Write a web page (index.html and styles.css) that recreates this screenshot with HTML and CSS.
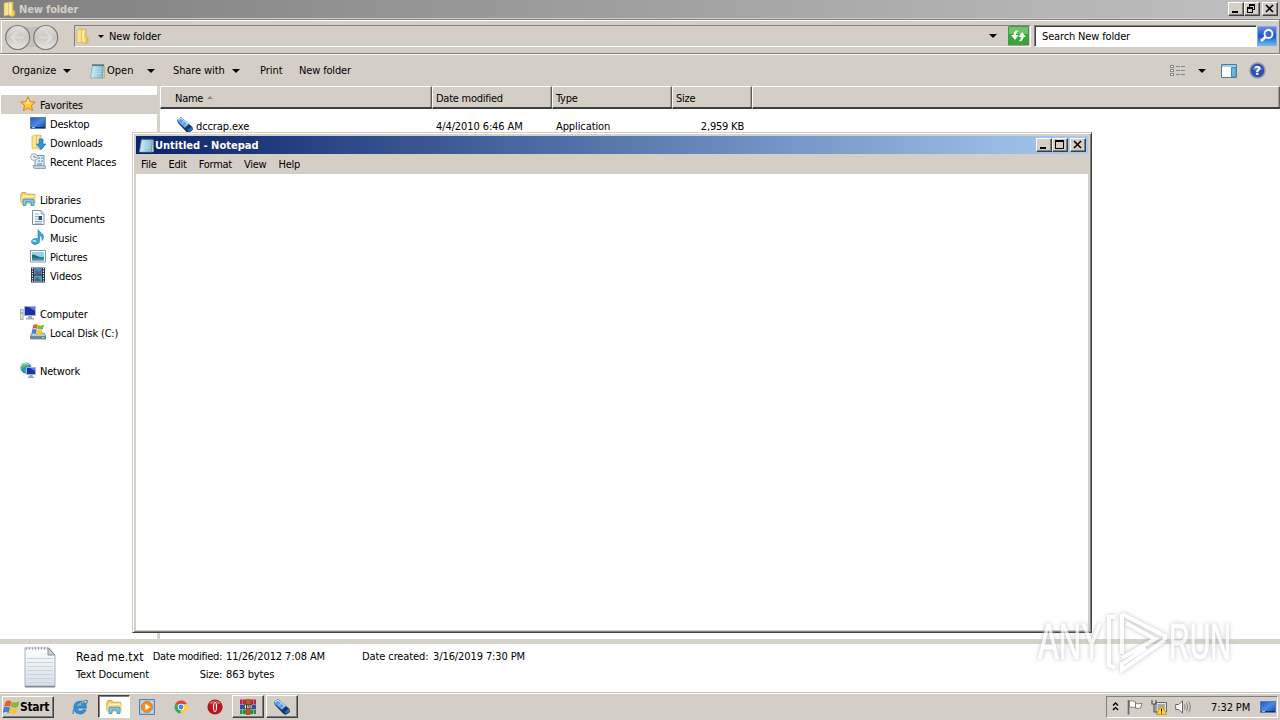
FILE: index.html
```html
<!DOCTYPE html>
<html lang="en">
<head>
  <meta charset="UTF-8">
  <title>New folder</title>
  <link rel="stylesheet" href="styles.css">
</head>
<body>
  <!-- Shared icons -->
  <svg class="defs" width="0" height="0">
    <defs>
      <linearGradient id="gFolder" x1="0" x2="1"><stop offset="0" stop-color="#fff3a8"/><stop offset="1" stop-color="#e3b73c"/></linearGradient>
      <linearGradient id="gScreen" x1="0" x2="1" y2="1"><stop offset="0" stop-color="#2456b8"/><stop offset=".5" stop-color="#4a8be6"/><stop offset="1" stop-color="#173f93"/></linearGradient>
      <linearGradient id="gPad" x1="0" x2="1"><stop offset="0" stop-color="#d8f2f8"/><stop offset="1" stop-color="#6fb4cf"/></linearGradient>
      <linearGradient id="gSheet" x1="0" x2="0" y2="1"><stop offset="0" stop-color="#fff"/><stop offset="1" stop-color="#d3dce6"/></linearGradient>
      <symbol id="folder" viewBox="0 0 16 16">
        <path d="M2 2l5-1v13l-5 1z" fill="#f8e48a" stroke="#d3a93c" stroke-width=".6"/>
        <path d="M7 1h4v8l2 1v4l-3 2-3-2z" fill="url(#gFolder)" stroke="#cda33a" stroke-width=".6"/>
        <path d="M8 3v10" stroke="#fffbd8"/>
      </symbol>
      <symbol id="pad" viewBox="0 0 16 16">
        <path d="M3.500 2.500h11l-1 12.500h-12z" fill="url(#gPad)" stroke="#6a9db0" stroke-width=".7"/>
        <path d="M13.500 15l1-12.500 1 .5v12z" fill="#d8cda0" stroke="#7f8a88" stroke-width=".4"/>
        <path d="M3.500 2h12" stroke="#345" stroke-width="2" stroke-dasharray="1 1"/>
        <path d="M4 5.500h9M3.700 8h9M3.300 10.500h9" stroke="#b5e2ee" stroke-width=".7"/>
      </symbol>
      <symbol id="exe" viewBox="0 0 16 16">
        <path d="M0 3L4 .3 15.500 10l.3 3L12 15.700 9.500 15 1 6z" fill="#16355f"/>
        <path d="M0 3L4 .3l8 7L8 11 1 5z" fill="#5da0ea"/>
        <path d="M1 3l3-1.800L11 7.200" stroke="#d4edff" fill="none"/>
        <path d="M4.500 6.500l4-3M7.500 9l3.500-3" stroke="#c8e4fc" stroke-width=".8"/>
        <path d="M10.500 13l4-3.500 .8 3-3 2.300z" fill="#1b72d8"/>
      </symbol>
      <symbol id="star" viewBox="0 0 16 16">
        <path d="M8 .8l2.100 4.800 5.300.5-4 3.400 1.200 5.200L8 12l-4.600 2.700 1.200-5.200-4-3.400 5.300-.5z" fill="#ffc936" stroke="#e07a1a" stroke-width=".9"/>
        <path d="M8 3l1.300 3.500 3 .3-5 1.400L4 7l2.700-.5z" fill="#fff0a0"/>
      </symbol>
      <symbol id="screen" viewBox="0 0 16 16">
        <path d="M.5 2.500h15v11H.5z" fill="url(#gScreen)" stroke="#5b7ba9"/>
        <path d="M1 12.500h14" stroke="#122d66"/>
        <path d="M2 12.500h3" stroke="#7fd0f0"/>
      </symbol>
      <symbol id="downloads" viewBox="0 0 16 16">
        <use href="#folder"/>
        <path d="M9 5h4v5h3l-5 5.500L6.500 10H9z" fill="#2f96de" stroke="#1561a5" stroke-width=".6"/>
      </symbol>
      <symbol id="recent" viewBox="0 0 16 16">
        <path d="M5 2.500h9v10.500h-9z" fill="#dcebf4" stroke="#7d93a4"/>
        <path d="M3 12.500h11q2 0 1.500 3H5q-2 0-2-3z" fill="#c3d2dc" stroke="#7d93a4" stroke-width=".8"/>
        <path d="M8 5h2M11 5h2M8 8h2M11 8h2M7 11h5" stroke="#4b88b8"/>
        <circle cx="4" cy="4" r="3.400" fill="#f4f7f9" stroke="#8b98a2" stroke-width=".8"/>
        <path d="M4 2v2.300h2" stroke="#555" fill="none" stroke-width=".7"/>
      </symbol>
      <symbol id="library" viewBox="0 0 16 16">
        <path d="M.8 3.200l1-1.700h4l1 1.700h8v8H.8z" fill="#efcf62" stroke="#bf9536" stroke-width=".7"/>
        <path d="M2.500 4.500h12v6h-12z" fill="#fff4b0"/>
        <path d="M1 6h14.500v7H1z" fill="#f3dc7c"/>
        <path d="M3 14.500V9.200q0-1 1-1h9q1 0 1 1v5.300h-3V11H6v3.500z" fill="#7fc8ea" stroke="#3289bb" stroke-width=".8"/>
      </symbol>
      <symbol id="document" viewBox="0 0 16 16">
        <path d="M2.500.5h8.500L14 4v10.500H2.500z" fill="#fff" stroke="#7690aa"/>
        <path d="M11 1v3h3" fill="#d9e7f2" stroke="#7690aa" stroke-width=".7"/>
        <path d="M5 4h4M5 6.500h3M5 9h3M5 11.500h7M5 13.200h7" stroke="#6d94bd" stroke-width=".8"/>
        <path d="M8.500 6H12v4H8.500z" fill="#234e86"/>
      </symbol>
      <symbol id="music" viewBox="0 0 16 16">
        <path d="M8 .5c1 3 5.500 3.200 5.500 7.500 0 2-1 3-1.500 3.500.5-3-.5-4-2.500-4.700V12c0 2-2 3.500-4.500 3.500S1.500 14 1.500 12.500 3.500 9.500 5.500 9.500c1 0 1.500 0 2.500.4z" fill="#3ba4e0" stroke="#2279b8" stroke-width=".6"/>
        <ellipse cx="4.500" cy="12" rx="2" ry="1" fill="#b9e6fb"/>
      </symbol>
      <symbol id="picture" viewBox="0 0 16 16">
        <path d="M.5 2.500h15v11.500H.5z" fill="#fff" stroke="#8796a5"/>
        <path d="M2 4h12v8.500H2z" fill="#8ed3ee"/>
        <path d="M2 6.500c4 0 6 3.500 12 2.500v1.500H2z" fill="#246b61"/>
        <path d="M2 10h12v2.500H2z" fill="#3d87b2"/>
      </symbol>
      <symbol id="video" viewBox="0 0 16 16">
        <path d="M1 .5h14v15H1z" fill="#25303c"/>
        <path d="M4 1h8v6.500H4z" fill="#438fcc"/><path d="M4 8.500h8V15H4z" fill="#4b9ccb"/>
        <path d="M6 3l3 2 2-3v5H5zM5 11l3-1 3 4H5z" fill="#6f5a68"/>
        <path d="M2.500 1v15M13.500 1v15" stroke="#fff" stroke-width="1.200" stroke-dasharray="1.300 1.200"/>
      </symbol>
      <symbol id="computer" viewBox="0 0 16 16">
        <path d="M.6 4.500h2.600v10H.6z" fill="#dfe5df" stroke="#89958a" stroke-width=".7"/><path d="M1 8h2" stroke="#63a84a"/>
        <path d="M4.500 1.500h11v9h-11z" fill="#1a2fb0" stroke="#a9b4c8"/>
        <path d="M9 2h6v4z" fill="#5f7de8"/>
        <path d="M8 11h4v2h2v1.500H6V13h2z" fill="#9eacc0"/>
      </symbol>
      <symbol id="flag" viewBox="0 0 16 16">
        <path d="M2.500 2.500Q5 .5 7.800 2.200L6.800 7.300Q4 5.800 1 7.400z" fill="#ec5a24"/>
        <path d="M8.300 2.600Q11.500 4 15.500 2.300L14 7.500Q10.500 8.800 7.300 7.400z" fill="#7dbb35"/>
        <path d="M.8 8.100Q3.500 6.600 6.600 8L5.300 13.200Q2.500 11.500-.3 13z" fill="#3c83d8"/>
        <path d="M7 8.200Q10 9.600 13.800 8.200L12.200 13.400Q9 14.700 5.800 13.400z" fill="#fbc42a"/>
      </symbol>
      <symbol id="disk" viewBox="0 0 16 16">
        <path d="M2 9h12l2 3v3H.5v-3z" fill="#b9c8d2" stroke="#6d7f8d" stroke-width=".8"/>
        <path d="M.5 12h15.500v3H.5z" fill="#648c9d"/><path d="M12 13.500h2" stroke="#8cff72"/>
        <use href="#flag" x="1.500" y="-1" width="13" height="13"/>
      </symbol>
      <symbol id="network" viewBox="0 0 16 16">
        <circle cx="6" cy="6" r="5.500" fill="#2d8fd0"/>
        <path d="M2 2q4-2 6 0L6 5 3 6 1 8q-1-4 1-6zM5 7l3 2-2 2.500z" fill="#55b857"/>
        <path d="M1.500 4Q5 0 9 3" stroke="#d1f2ff" fill="none"/>
        <path d="M6.500 5.500h9v7h-9z" fill="#1a2fb0" stroke="#a9b4c8"/><path d="M10 6h5v3z" fill="#5f7de8"/>
        <path d="M9.500 13h3v1.500H14V16H8v-1.500h1.500z" fill="#93a3ba"/>
      </symbol>
      <symbol id="ie" viewBox="0 0 16 16">
        <path d="M14.500 9.200H5.300q.3 2.800 3 2.800 1.800 0 2.500-1.200h3.300Q12.500 15 8.300 15 1.800 14.700 1.800 8.500 2.100 2.200 8.300 2.100 14.800 2.300 14.500 9.200zM5.400 6.800h5.500Q10.500 5 8.200 5 6 5 5.400 6.800z" fill="#2c90dc" stroke="#1a5da4" stroke-width=".5"/>
        <path d="M1.500 15Q-.5 12 5.500 6.500T15 1.500q1 1-1 3.500" fill="none" stroke="#3687c8" stroke-width="1.200"/>
        <path d="M5 7Q10 2.500 14 1.800" fill="none" stroke="#e8c95c" stroke-width=".9"/>
      </symbol>
      <symbol id="wmp" viewBox="0 0 16 16">
        <path d="M.5.5h15v15H.5z" fill="#9fc9ea" stroke="#4b86bb"/><path d="M2.500 2.500h11v11h-11z" fill="#d9ecfa"/>
        <circle cx="8" cy="8" r="5.700" fill="#f58a1f" stroke="#d96a0b" stroke-width=".6"/><path d="M6.300 4.800L11.500 8l-5.200 3.200z" fill="#fff"/>
      </symbol>
      <symbol id="chrome" viewBox="0 0 16 16">
        <path d="M8 8L2.500 4.600A6.500 6.500 0 0 1 14 5.300H8z" fill="#e14434"/>
        <path d="M8 8l6-2.700A6.500 6.500 0 0 1 7.500 14.500z" fill="#fbd03b"/>
        <path d="M8 8l-.5 6.500A6.500 6.500 0 0 1 2.500 4.600z" fill="#3aa757"/>
        <circle cx="8" cy="8" r="3.300" fill="#fff"/><circle cx="8" cy="8" r="2.400" fill="#4384f0"/>
      </symbol>
      <symbol id="opera" viewBox="0 0 16 16">
        <circle cx="8" cy="8" r="7.600" fill="#b9151b"/><path d="M2 4q6-5 12 0-6 3-12 0z" fill="#dd6260"/>
        <ellipse cx="8" cy="8" rx="2.500" ry="5.800" fill="#fff" stroke="#7b0a0e" stroke-width=".7"/>
        <ellipse cx="8" cy="8" rx=".9" ry="4.500" fill="#b9151b"/>
      </symbol>
      <symbol id="rar" viewBox="0 0 16 16">
        <path d="M0 .5h16V5H0z" fill="#b5264a"/><path d="M0 5.500h16V10H0z" fill="#3a45b4"/><path d="M0 10.500h16V15H0z" fill="#2f8752"/>
        <path d="M6 0h4.500v16H6z" fill="#b4592b"/><path d="M4.500 5.500h7.500v4H4.500z" fill="#f1e4d9" stroke="#654"/><path d="M6.500 5v4M10 5v4M8.200 6v2.500" stroke="#333"/>
        <path d="M2.500 1v4M13.500 1v4" stroke="#d5647c"/><path d="M2.500 11v4M13.500 11v4" stroke="#6ec281"/>
      </symbol>
    </defs>
  </svg>

  <div class="explorer">
    <div class="titlebar">
      <svg class="icon"><use href="#folder"/></svg>
      <span class="title">New folder</span>
      <div class="controls">
        <span class="ctl"><svg width="13" height="11"><path d="M3 9h6" stroke="#000" stroke-width="2"/></svg></span>
        <span class="ctl"><svg width="13" height="11" shape-rendering="crispEdges"><path d="M4.500 4V1.500h5v5H8M4 2h6M2.500 4.500h5v5h-5zM2 5h6" fill="none" stroke="#000"/></svg></span>
        <span class="ctl close"><svg width="13" height="11"><path d="M3 2l7 7M10 2L3 9" stroke="#000" stroke-width="1.600"/></svg></span>
      </div>
    </div>

    <div class="navbar">
      <svg class="arrows" width="56" height="28" viewBox="0 0 56 28">
        <defs><linearGradient id="gBtn" x1="0" x2="0" y2="1"><stop offset="0" stop-color="#e4e2df"/><stop offset=".5" stop-color="#c9c6c1"/><stop offset="1" stop-color="#e9e7e3"/></linearGradient></defs>
        <path d="M13 3h28v20H13z" fill="#c3c0bb"/>
        <circle cx="12.700" cy="13.500" r="12" fill="url(#gBtn)" stroke="#7b7b7b" stroke-width="1.200"/>
        <circle cx="40.700" cy="13.500" r="12" fill="url(#gBtn)" stroke="#7b7b7b" stroke-width="1.200"/>
        <path d="M19 13.500H6.500M12 8l-5.500 5.500L12 19" fill="none" stroke="#dedbd7" stroke-width="2.200"/>
        <path d="M34 13.500h12.500M41 8l5.500 5.500L41 19" fill="none" stroke="#dedbd7" stroke-width="2.200"/>
      </svg>
      <div class="address">
        <svg class="icon"><use href="#folder"/></svg>
        <i class="caret small"></i>
        <span class="path">New folder</span>
        <i class="caret drop"></i>
        <svg class="refresh" width="21" height="20" viewBox="0 0 21 20">
          <path d="M.5.5h20v18.500H.5z" fill="#36a83a" stroke="#5a8a5c"/><path d="M1 1h19v7H1z" fill="#67c565"/>
          <path d="M10.500 5Q6 3 5.500 9H3l4 5 3.500-5H8q0-3 2.500-4zM10.500 15q4.500 1 5-4H18l-4-5-3.500 5H13q0 3-2.500 4z" fill="#fff"/>
        </svg>
      </div>
      <div class="search">Search New folder</div>
      <svg class="go" width="20" height="20" viewBox="0 0 20 20">
        <defs><linearGradient id="gGo" x1="0" x2="0" y2="1"><stop offset="0" stop-color="#6f92e6"/><stop offset=".5" stop-color="#2450c8"/><stop offset="1" stop-color="#5cc3f0"/></linearGradient></defs>
        <path d="M.5.5h19v19H.5z" fill="url(#gGo)" stroke="#8ea9dc"/>
        <circle cx="11.500" cy="8" r="4" fill="#3a69d4" stroke="#fff" stroke-width="1.800"/><path d="M8.500 11l-4.500 4" stroke="#fff" stroke-width="2.600"/>
      </svg>
    </div>

    <div class="toolbar">
      <span class="tool organize">Organize</span><i class="caret"></i>
      <svg class="icon open-icon"><use href="#pad"/></svg>
      <span class="tool open">Open</span><i class="caret"></i>
      <span class="tool share">Share with</span><i class="caret"></i>
      <span class="tool print">Print</span>
      <span class="tool newfolder">New folder</span>
      <div class="tool-right">
        <svg width="16" height="14" viewBox="0 0 16 14" shape-rendering="crispEdges">
          <path d="M.5 1.500h3v2h-3zM.5 5.500h3v2h-3zM.5 9.500h3v2h-3z" fill="#fff" stroke="#7c8790"/>
          <path d="M6 2.500h10M6 6.500h10M6 10.500h10" stroke="#7c8790" stroke-dasharray="4 1"/>
        </svg>
        <i class="caret"></i>
        <svg class="preview" width="16" height="14" viewBox="0 0 16 14">
          <path d="M.5.5h15v13H.5z" fill="#fff" stroke="#4a7a9f"/><path d="M1 1h14v2H1z" fill="#a9cce4"/><path d="M10.500 3.500h4.500V13h-4.500z" fill="#6cb4d8" stroke="#4a87aa"/>
        </svg>
        <svg class="help" width="17" height="17" viewBox="0 0 17 17">
          <circle cx="8.500" cy="8.500" r="7.500" fill="#2b4db4" stroke="#8d99af" stroke-width="1.500"/><path d="M3 7q5-7 11 0-6 3-11 0z" fill="#5e80d4"/>
          <text x="8.500" y="12.700" text-anchor="middle" class="qmark">?</text>
        </svg>
      </div>
    </div>

    <div class="content">
      <div class="sidebar">
        <div class="item top selected"><svg class="icon"><use href="#star"/></svg>Favorites</div>
        <div class="item"><svg class="icon"><use href="#screen"/></svg>Desktop</div>
        <div class="item"><svg class="icon"><use href="#downloads"/></svg>Downloads</div>
        <div class="item"><svg class="icon"><use href="#recent"/></svg>Recent Places</div>
        <div class="item top group"><svg class="icon"><use href="#library"/></svg>Libraries</div>
        <div class="item"><svg class="icon"><use href="#document"/></svg>Documents</div>
        <div class="item"><svg class="icon"><use href="#music"/></svg>Music</div>
        <div class="item"><svg class="icon"><use href="#picture"/></svg>Pictures</div>
        <div class="item"><svg class="icon"><use href="#video"/></svg>Videos</div>
        <div class="item top group"><svg class="icon"><use href="#computer"/></svg>Computer</div>
        <div class="item"><svg class="icon"><use href="#disk"/></svg>Local Disk (C:)</div>
        <div class="item top group"><svg class="icon"><use href="#network"/></svg>Network</div>
      </div>
      <div class="files">
        <div class="row header">
          <span class="name">Name <i class="sort"></i></span><span>Date modified</span><span>Type</span><span class="size">Size</span><span class="rest"></span>
        </div>
        <div class="row file">
          <span class="name"><svg class="icon"><use href="#exe"/></svg>dccrap.exe</span><span>4/4/2010 6:46 AM</span><span>Application</span><span class="size">2,959 KB</span>
        </div>
      </div>
    </div>

    <div class="details">
      <svg class="sheet" width="32" height="42" viewBox="0 0 32 42">
        <path d="M1 2h24l6 7v32H1z" fill="url(#gSheet)" stroke="#a8b1b9"/>
        <path d="M3 12.500h26M3 16.500h26M3 20.500h26M3 24.500h26M3 28.500h26M3 32.500h26M3 36.500h26" stroke="#c9d4df"/>
        <path d="M24 2v7h7z" fill="#c8ced4" stroke="#8a939b"/>
        <path d="M2 2.500h22" stroke="#a5adb3" stroke-width="3" stroke-dasharray="1 2"/>
        <path d="M1 40.500h30" stroke="#818a92" stroke-width="1.500"/>
      </svg>
      <div class="info main"><span class="filename">Read me.txt</span><span>Text Document</span></div>
      <div class="info labels"><span>Date modified:</span><span>Size:</span></div>
      <div class="info values"><span>11/26/2012 7:08 AM</span><span>863 bytes</span></div>
      <div class="info created"><span>Date created:</span></div>
      <div class="info"><span>3/16/2019 7:30 PM</span></div>
    </div>
  </div>

  <div class="notepad">
    <div class="titlebar">
      <svg class="icon"><use href="#pad"/></svg>
      <span class="title">Untitled - Notepad</span>
      <div class="controls">
        <span class="ctl"><svg width="13" height="11"><path d="M3 9h6" stroke="#000" stroke-width="2"/></svg></span>
        <span class="ctl"><svg width="13" height="11" shape-rendering="crispEdges"><path d="M2.500 1.500h8v8h-8zM2 2h9" fill="none" stroke="#000"/></svg></span>
        <span class="ctl close"><svg width="13" height="11"><path d="M3 2l7 7M10 2L3 9" stroke="#000" stroke-width="1.600"/></svg></span>
      </div>
    </div>
    <div class="menu"><span>File</span><span>Edit</span><span>Format</span><span>View</span><span>Help</span></div>
    <div class="page"></div>
  </div>

  <div class="taskbar">
    <div class="start"><svg class="flag"><use href="#flag"/></svg>Start</div>
    <div class="task"><svg class="icon"><use href="#ie"/></svg></div>
    <div class="task pressed"><svg class="icon"><use href="#library"/></svg></div>
    <div class="task"><svg class="icon"><use href="#wmp"/></svg></div>
    <div class="task"><svg class="icon"><use href="#chrome"/></svg></div>
    <div class="task"><svg class="icon"><use href="#opera"/></svg></div>
    <div class="task raised"><svg class="icon"><use href="#rar"/></svg></div>
    <div class="task raised"><svg class="icon"><use href="#exe"/></svg></div>
    <div class="tray">
      <svg width="7" height="10" viewBox="0 0 7 10"><path d="M1 3.500L3.500 1 6 3.500M1 8L3.500 5.500 6 8" fill="none" stroke="#000" stroke-width="1.400"/></svg>
      <svg width="16" height="16" viewBox="0 0 16 16"><path d="M1.500 1v14.500" stroke="#666" stroke-width="1.600"/><path d="M2.500 2q3-1 6 1v6q-3-1.500-6-.7zM8.500 4q3 1.500 6.500.3L13.500 9q-2.500 1-5 0z" fill="#fff" stroke="#777" stroke-width=".9"/></svg>
      <svg width="16" height="16" viewBox="0 0 16 16"><path d="M5 3.500h10.500V13H5z" fill="#e5e8ea" stroke="#666"/><path d="M6.500 5h7.500v6H6.500z" fill="#a8adb0"/><path d="M1 1v4h4V1M3 5v8h3" fill="none" stroke="#555" stroke-width="1.200"/><path d="M10.500 6.500l5 9h-10z" fill="#ffd829" stroke="#b78b00" stroke-width=".7"/><path d="M10.500 9.500v3M10.500 13.500v1" stroke="#000"/></svg>
      <svg width="16" height="16" viewBox="0 0 16 16"><path d="M.7 5.500h3L7.500 2v12L3.700 10.500h-3z" fill="#fff" stroke="#666"/><path d="M9.500 5.500q1.500 2.500 0 5M11.500 4q2.500 4 0 8M13.500 2.500q3.500 5.500 0 11" fill="none" stroke="#777" stroke-width=".9"/></svg>
      <span class="clock">7:32 PM</span>
      <svg class="icon"><use href="#screen"/></svg>
    </div>
  </div>

  <svg class="watermark" width="216" height="80" viewBox="0 0 216 80">
    <text x="4" y="53" textLength="64" lengthAdjust="spacingAndGlyphs">ANY</text>
    <path d="M81 11h-6v48l6 3M88 8v40M88 8l43 22v4M92 17l29 16-33 19M131 34L88 64v-6l24-16"/>
    <text x="135" y="53" textLength="62" lengthAdjust="spacingAndGlyphs">RUN</text>
  </svg>
</body>
</html>
```

FILE: styles.css
```css
body {
  margin: 0;
  width: 1280px;
  height: 720px;
  overflow: hidden;
  position: relative;
  display: flex;
  flex-direction: column;
  background: #fff;
  color: #000;
  font-family: "DejaVu Sans Condensed", "DejaVu Sans", sans-serif;
  font-stretch: condensed;
  font-size: 11px;
  line-height: 19px;
  white-space: nowrap;
}
.defs {
  position: absolute;
}
.icon {
  width: 16px;
  height: 16px;
  flex: none;
}
.explorer {
  height: 692px;
  display: flex;
  flex-direction: column;
  background: #d5cec6;
}

/* Title bars */
.titlebar {
  box-sizing: border-box;
  height: 18px;
  display: flex;
  align-items: center;
  padding: 0 2px;
  background: linear-gradient(to right, #808080, #c0c0c0);
  color: #d4d0c8;
  font-weight: bold;
}
.title {
  padding-left: 1px;
}
.explorer .title {
  letter-spacing: -0.15px;
}
.controls {
  display: flex;
  margin-left: auto;
}
.ctl {
  box-sizing: border-box;
  width: 16px;
  height: 14px;
  background: #d5cec6;
  border: 1px solid;
  border-color: #fff #404040 #404040 #fff;
  box-shadow: inset -1px -1px #808080;
}
.ctl svg {
  display: block;
}
.ctl.close {
  margin-left: 2px;
}

/* Address bar */
.navbar {
  box-sizing: border-box;
  height: 35px;
  margin-top: 1px;
  display: flex;
  align-items: flex-start;
  padding: 5px 1px 0 4px;
  background: #d5cec6;
  border: 1px solid #808080;
  border-left-color: #d5cec6;
  box-shadow: inset 1px 1px #fff;
}
.arrows {
  margin-top: -1px;
}
.address {
  box-sizing: border-box;
  width: 957px;
  height: 22px;
  margin-left: 13px;
  display: flex;
  align-items: center;
  border: 1px solid;
  border-color: #808080 #fff #fff #808080;
}
.address .path {
  padding-left: 5px;
  width: 880px;
  letter-spacing: -0.15px;
}
.address .small {
  margin-left: 7px;
}
.refresh {
  margin-left: 11px;
}
.caret {
  border: 4px solid transparent;
  border-top-color: #000;
  border-bottom: 0;
  flex: none;
}
.caret.small {
  border-width: 3px 3px 0;
}
.search {
  box-sizing: border-box;
  width: 223px;
  height: 22px;
  margin-left: 3px;
  padding-left: 7px;
  background: #fff;
  border: 1px solid;
  border-color: #808080 #fff #fff #808080;
  box-shadow: inset 1px 1px #404040;
  line-height: 22px;
  letter-spacing: -0.15px;
}
.go {
  margin-top: 1px;
}

/* Command bar */
.toolbar {
  height: 31px;
  display: flex;
  align-items: center;
  padding-left: 12px;
  border-top: 1px solid #fff;
}
.tool {
  flex: none;
}
.organize {
  width: 51px;
}
.open-icon {
  margin-left: 18px;
}
.open {
  width: 40px;
  padding-left: 2px;
}
.share {
  width: 59px;
  padding-left: 18px;
  letter-spacing: -0.1px;
}
.print {
  padding-left: 20px;
  width: 39px;
}
.newfolder {
  letter-spacing: -0.15px;
}
.tool-right {
  margin-left: auto;
  display: flex;
  align-items: center;
  padding-right: 14px;
}
.tool-right .caret {
  margin-left: 12px;
}
.preview {
  margin-left: 15px;
}
.help {
  margin-left: 12px;
}
.qmark {
  font: bold 12px "DejaVu Sans", sans-serif;
  fill: #fff;
}

/* Folder content */
.content {
  height: 553px;
  display: flex;
  background: #fff;
}
.sidebar {
  box-sizing: border-box;
  width: 160px;
  padding: 9px 0 0 1px;
  border-right: 3px solid #d5d2cc;
  letter-spacing: -0.2px;
}
.item {
  box-sizing: border-box;
  height: 19px;
  display: flex;
  align-items: center;
  gap: 4px;
  padding: 2px 0 0 29px;
}
.item .icon {
  margin-top: -3px;
}
.item.top {
  padding-left: 19px;
}
.item.selected {
  background: #d5cec6;
}
.item.group {
  margin-top: 19px;
}
.files {
  flex: 1;
}
.row {
  display: grid;
  grid-template-columns: 272px 120px 120px 80px 1fr;
}
.row span {
  box-sizing: border-box;
  padding-left: 4px;
}
.header span {
  height: 23px;
  padding-left: 3px;
  line-height: 23px;
  letter-spacing: -0.25px;
  background: #d5cec6;
  border: 1px solid;
  border-color: #fff #606060 #404040 #fff;
  border-width: 1px 1px 2px;
  box-shadow: inset -1px 0 #a09c96;
}
.header .name {
  padding-left: 14px;
}
.sort {
  display: inline-block;
  border: 3px solid transparent;
  border-top: 0;
  border-bottom-color: #8c8983;
  margin: 0 0 3px 1px;
}
.file {
  margin-top: 8px;
}
.file .name {
  display: flex;
  align-items: center;
  gap: 3px;
  padding-left: 17px;
}
.file .icon {
  margin-top: -3px;
}
.file span {
  letter-spacing: -0.1px;
}
.file .size {
  text-align: right;
  padding-right: 8px;
  letter-spacing: -0.2px;
}

/* Details pane */
.details {
  height: 48px;
  display: flex;
  background: #fff;
  border-top: 5px solid #d5d2c9;
}
.sheet {
  margin: 2px 0 0 24px;
}
.info {
  display: flex;
  flex-direction: column;
  line-height: 18px;
  padding-top: 4px;
  letter-spacing: -0.1px;
}
.main {
  width: 76px;
  padding-left: 20px;
}
.filename {
  font-size: 12px;
  letter-spacing: 0.15px;
}
.labels {
  width: 70px;
  align-items: flex-end;
  letter-spacing: -0.3px;
}
.values {
  width: 136px;
  padding-left: 4px;
}
.created {
  width: 71px;
}

/* Notepad window */
.notepad {
  position: absolute;
  left: 132px;
  top: 132px;
  box-sizing: border-box;
  width: 960px;
  height: 501px;
  display: flex;
  flex-direction: column;
  padding: 2px;
  background: #d5d0c9;
  border: 1px solid;
  border-color: #d5cec6 #404040 #404040 #d5cec6;
  box-shadow: inset 1px 1px #fff, inset -1px -1px #808080;
}
.notepad .titlebar {
  margin: 1px 1px 0;
  background: linear-gradient(to right, #0a246a, #a6caf0);
  color: #fff;
}
.menu {
  height: 20px;
  display: flex;
  gap: 12px;
  padding-left: 6px;
  line-height: 21px;
  letter-spacing: -0.25px;
  background: #d5cec6;
}
.page {
  flex: 1;
  margin: 0 1px;
  background: #fff;
}

/* Taskbar */
.taskbar {
  box-sizing: border-box;
  height: 28px;
  display: flex;
  align-items: flex-start;
  padding: 2px 2px 0;
  background: #d5cec6;
  border-top: 1px solid #c5c1ba;
  box-shadow: inset 0 1px #fff;
}
.start,
.raised {
  background: #d5cec6;
  border: 1px solid;
  border-color: #fff #404040 #404040 #fff;
  box-shadow: inset -1px -1px #808080;
}
.start {
  box-sizing: border-box;
  width: 52px;
  height: 22px;
  margin: 1px 10px 0 0;
  display: flex;
  align-items: center;
  font-size: 12px;
  font-weight: bold;
  letter-spacing: -0.3px;
}
.flag {
  width: 17px;
  height: 17px;
}
.task {
  box-sizing: border-box;
  width: 32px;
  height: 23px;
  margin-right: 1.7px;
  display: flex;
  align-items: center;
  justify-content: center;
}
.pressed {
  background: #fff;
  border: 1px solid;
  border-color: #404040 #fff #fff #404040;
  box-shadow: inset 1px 1px #808080;
}
.tray {
  box-sizing: border-box;
  width: 172px;
  height: 22px;
  margin: 1px 0 0 auto;
  display: flex;
  align-items: center;
  gap: 8px;
  padding-left: 5px;
  border: 1px solid;
  border-color: #808080 #fff #fff #808080;
}
.tray > svg {
  flex: none;
}
.clock {
  width: 41px;
  padding-left: 12px;
  letter-spacing: -0.1px;
}

/* Overlay logo */
.watermark {
  position: absolute;
  left: 1034px;
  top: 606px;
  opacity: 0.75;
  filter: drop-shadow(0 0 2px #aaa);
}
.watermark text {
  font: 50px "Liberation Sans", sans-serif;
  fill: #fff;
  stroke: #fff;
}
.watermark path {
  fill: none;
  stroke: #fff;
  stroke-width: 4;
}
```
